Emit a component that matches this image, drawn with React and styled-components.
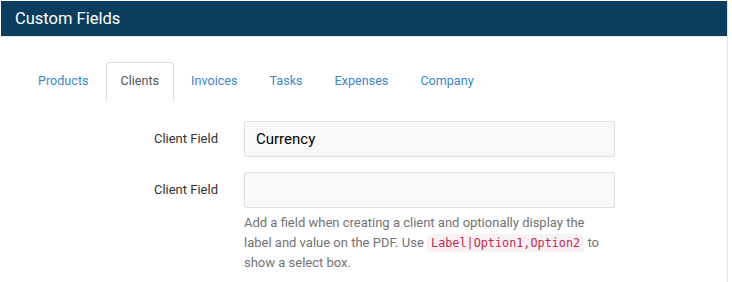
import React, { useState } from 'react'
import styled, { createGlobalStyle } from 'styled-components'

const GlobalStyle = createGlobalStyle`
  html, body {
    margin: 0;
    padding: 0;
    background: #fff;
  }
  body {
    font-family: Roboto, "Liberation Sans", sans-serif;
    font-size: 14px;
    color: #333;
  }
`

const tabs = ['Products', 'Clients', 'Invoices', 'Tasks', 'Expenses', 'Company']

const App = () => {
  const [active, setActive] = useState('Clients')

  return (
    <>
      <GlobalStyle />
      <Panel>
        <Heading>
          <Title>Custom Fields</Title>
        </Heading>
        <Body>
          <Tabs>
            {tabs.map((t) => (
              <Tab key={t} active={t === active} onClick={() => setActive(t)}>
                {t}
              </Tab>
            ))}
          </Tabs>
          <Form>
            <Row>
              <Label>Client Field</Label>
              <Field>
                <Input defaultValue="Currency" />
              </Field>
            </Row>
            <Row>
              <Label>Client Field</Label>
              <Field>
                <Input defaultValue="" />
                <Help>
                  Add a field when creating a client and optionally display the
                  label and value on the PDF. Use <Code>Label|Option1,Option2</Code> to
                  show a select box.
                </Help>
              </Field>
            </Row>
          </Form>
        </Body>
      </Panel>
    </>
  )
}

export default App

const Panel = styled.div`
  width: 728px;
  height: 282px;
  padding-left: 1px;
  padding-top: 1px;
  box-sizing: border-box;
  border-right: 1px solid #e3e3e3;
`

const Heading = styled.div`
  height: 36px;
  width: 726px;
  background: #0b3e5e;
  border-bottom: 1px solid #e6e6e6;
  display: flex;
  align-items: center;
  padding-left: 14px;
  box-sizing: border-box;
`

const Title = styled.h3`
  margin: 0;
  color: #fff;
  font-size: 16.5px;
  font-weight: 400;
`

const Body = styled.div`
  padding: 25px 0 0 22px;
`

const Tabs = styled.ul`
  display: flex;
  list-style: none;
  margin: 0;
  padding: 0;
`

const Tab = styled.li`
  margin-right: 2px;
  padding: 8px 14px 10px;
  line-height: 20px;
  font-size: 12.6px;
  cursor: pointer;
  border: 1px solid ${(p) => (p.active ? '#ddd' : 'transparent')};
  border-bottom: none;
  border-radius: 4px 4px 0 0;
  color: ${(p) => (p.active ? '#555' : '#3a87c8')};
  background: #fff;
`

const Form = styled.div`
  padding-top: 20px;
`

const Row = styled.div`
  display: grid;
  grid-template-columns: 195px 371px;
  column-gap: 26px;
  align-items: start;
  margin-bottom: 15px;
`

const Label = styled.label`
  text-align: right;
  font-size: 13px;
  line-height: 36px;
  color: #333;
`

const Field = styled.div`
  display: flex;
  flex-direction: column;
`

const Input = styled.input`
  height: 36px;
  box-sizing: border-box;
  border: 1px solid #dfdfdf;
  border-radius: 2px;
  background: #f8f8f8;
  padding: 0 11px;
  font-family: Roboto, "Liberation Sans", sans-serif;
  font-size: 15px;
  color: #000;
  outline: none;
`

const Help = styled.p`
  margin: 5px 0 0;
  color: #737373;
  font-size: 13px;
  line-height: 20px;
`

const Code = styled.code`
  font-family: "DejaVu Sans Mono", "Liberation Mono", monospace;
  font-size: 11.8px;
  color: #c7254e;
  background: #f9f2f4;
  padding: 2px 4px;
  border-radius: 4px;
`
